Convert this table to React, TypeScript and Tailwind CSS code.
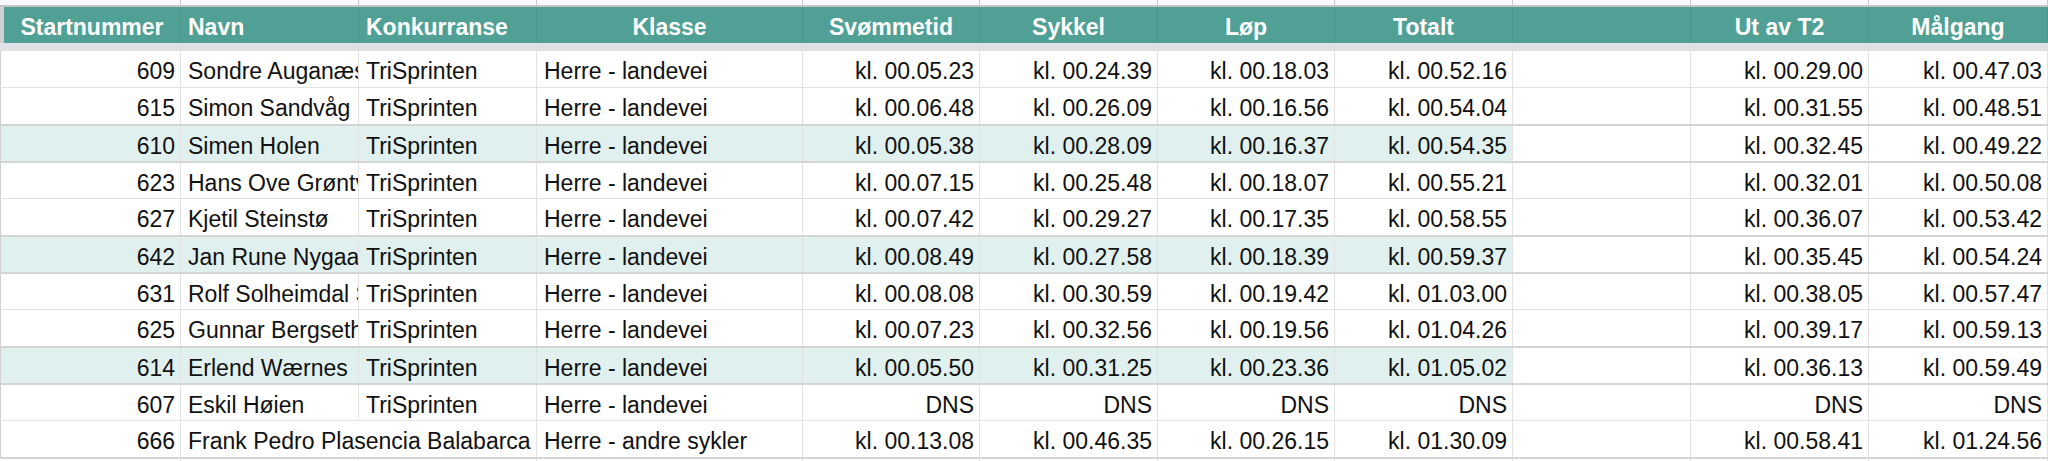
import React from "react";

const cols =
  "grid grid-cols-[181px_178px_178px_266px_177px_178px_177px_178px_178px_178px_179px]";

type Row = {
  nr: string;
  navn: string;
  konk: string;
  klasse: string;
  tider: string[];
  ut: string;
  mal: string;
  hl?: boolean;
};

const rows: Row[] = [
  { nr: "609", navn: "Sondre Auganæs", konk: "TriSprinten", klasse: "Herre - landevei", tider: ["kl. 00.05.23", "kl. 00.24.39", "kl. 00.18.03", "kl. 00.52.16"], ut: "kl. 00.29.00", mal: "kl. 00.47.03" },
  { nr: "615", navn: "Simon Sandvåg", konk: "TriSprinten", klasse: "Herre - landevei", tider: ["kl. 00.06.48", "kl. 00.26.09", "kl. 00.16.56", "kl. 00.54.04"], ut: "kl. 00.31.55", mal: "kl. 00.48.51" },
  { nr: "610", navn: "Simen Holen", konk: "TriSprinten", klasse: "Herre - landevei", tider: ["kl. 00.05.38", "kl. 00.28.09", "kl. 00.16.37", "kl. 00.54.35"], ut: "kl. 00.32.45", mal: "kl. 00.49.22", hl: true },
  { nr: "623", navn: "Hans Ove Grøntvedt", konk: "TriSprinten", klasse: "Herre - landevei", tider: ["kl. 00.07.15", "kl. 00.25.48", "kl. 00.18.07", "kl. 00.55.21"], ut: "kl. 00.32.01", mal: "kl. 00.50.08" },
  { nr: "627", navn: "Kjetil Steinstø", konk: "TriSprinten", klasse: "Herre - landevei", tider: ["kl. 00.07.42", "kl. 00.29.27", "kl. 00.17.35", "kl. 00.58.55"], ut: "kl. 00.36.07", mal: "kl. 00.53.42" },
  { nr: "642", navn: "Jan Rune Nygaard", konk: "TriSprinten", klasse: "Herre - landevei", tider: ["kl. 00.08.49", "kl. 00.27.58", "kl. 00.18.39", "kl. 00.59.37"], ut: "kl. 00.35.45", mal: "kl. 00.54.24", hl: true },
  { nr: "631", navn: "Rolf Solheimdal Sunde", konk: "TriSprinten", klasse: "Herre - landevei", tider: ["kl. 00.08.08", "kl. 00.30.59", "kl. 00.19.42", "kl. 01.03.00"], ut: "kl. 00.38.05", mal: "kl. 00.57.47" },
  { nr: "625", navn: "Gunnar Bergseth", konk: "TriSprinten", klasse: "Herre - landevei", tider: ["kl. 00.07.23", "kl. 00.32.56", "kl. 00.19.56", "kl. 01.04.26"], ut: "kl. 00.39.17", mal: "kl. 00.59.13" },
  { nr: "614", navn: "Erlend Wærnes", konk: "TriSprinten", klasse: "Herre - landevei", tider: ["kl. 00.05.50", "kl. 00.31.25", "kl. 00.23.36", "kl. 01.05.02"], ut: "kl. 00.36.13", mal: "kl. 00.59.49", hl: true },
  { nr: "607", navn: "Eskil Høien", konk: "TriSprinten", klasse: "Herre - landevei", tider: ["DNS", "DNS", "DNS", "DNS"], ut: "DNS", mal: "DNS" },
  { nr: "666", navn: "Frank Pedro Plasencia Balabarca", konk: "", klasse: "Herre - andre sykler", tider: ["kl. 00.13.08", "kl. 00.46.35", "kl. 00.26.15", "kl. 01.30.09"], ut: "kl. 00.58.41", mal: "kl. 01.24.56" },
];

const cell = "flex items-center pt-[4px] overflow-hidden whitespace-nowrap border-r border-[#e2e2e2] leading-[26px]";

const App = () => {
  return (
    <div className="w-[2048px] h-[461px] overflow-hidden bg-white text-[23px] text-[#111] font-['Liberation_Sans',Arial,sans-serif]">
      {/* column letters strip (cut off) */}
      <div className={`${cols} h-[7px] bg-[#f8f9fa] border-b-2 border-[#c4c4c4]`}>
        {Array.from({ length: 11 }).map((_, i) => (
          <div key={i} className="border-r border-[#c7c7c7]" />
        ))}
      </div>

      {/* header */}
      <div className={`${cols} h-[36px] bg-[#51a095] text-white font-bold`}>
        <div className="flex items-center justify-center pt-[4px] leading-[26px] border-r border-[#4a9489] border-l-4 border-l-[#d0d0d0]">Startnummer</div>
        <div className="flex items-center px-[7px] pt-[4px] leading-[26px] border-r border-[#4a9489]">Navn</div>
        <div className="flex items-center px-[7px] pt-[4px] leading-[26px] border-r border-[#4a9489]">Konkurranse</div>
        {["Klasse", "Svømmetid", "Sykkel", "Løp", "Totalt", "", "Ut av T2", "Målgang"].map((h, i) => (
          <div key={i} className="flex items-center justify-center pt-[4px] leading-[26px] border-r border-[#4a9489]">
            {h}
          </div>
        ))}
      </div>
      <div className="h-[7px] bg-[#dfe1e7]" />

      {/* rows */}
      {rows.map((r, i) => {
        const thick = r.hl || (i > 0 && rows[i - 1].hl);
        const bg = r.hl ? "bg-[#e0f0ee]" : "bg-white";
        const span = r.konk === "";
        return (
          <div
            key={r.nr}
            className={`${cols} h-[37px] ${thick ? "border-t-2 border-[#d4d4d4]" : "border-t border-[#e2e2e2]"}`}
          >
            <div className={`${cell} ${bg} justify-end pr-[5px] border-l border-l-[#cfcfcf]`}>{r.nr}</div>
            {span ? (
              <div className={`${cell} ${bg} col-span-2 pl-[7px]`}>{r.navn}</div>
            ) : (
              <>
                <div className={`${cell} ${bg} pl-[7px]`}>{r.navn}</div>
                <div className={`${cell} ${bg} pl-[7px]`}>{r.konk}</div>
              </>
            )}
            <div className={`${cell} ${bg} pl-[7px]`}>{r.klasse}</div>
            {r.tider.map((t, j) => (
              <div key={j} className={`${cell} ${bg} justify-end pr-[5px]`}>
                {t}
              </div>
            ))}
            <div className={`${cell} bg-white`} />
            <div className={`${cell} bg-white justify-end pr-[5px]`}>{r.ut}</div>
            <div className={`${cell} bg-white justify-end pr-[5px]`}>{r.mal}</div>
          </div>
        );
      })}
      <div className={`${cols} h-[10px] border-t-2 border-[#d4d4d4]`}>
        {Array.from({ length: 11 }).map((_, i) => (
          <div key={i} className="border-r border-[#e2e2e2]" />
        ))}
      </div>
    </div>
  );
};

export default App;
